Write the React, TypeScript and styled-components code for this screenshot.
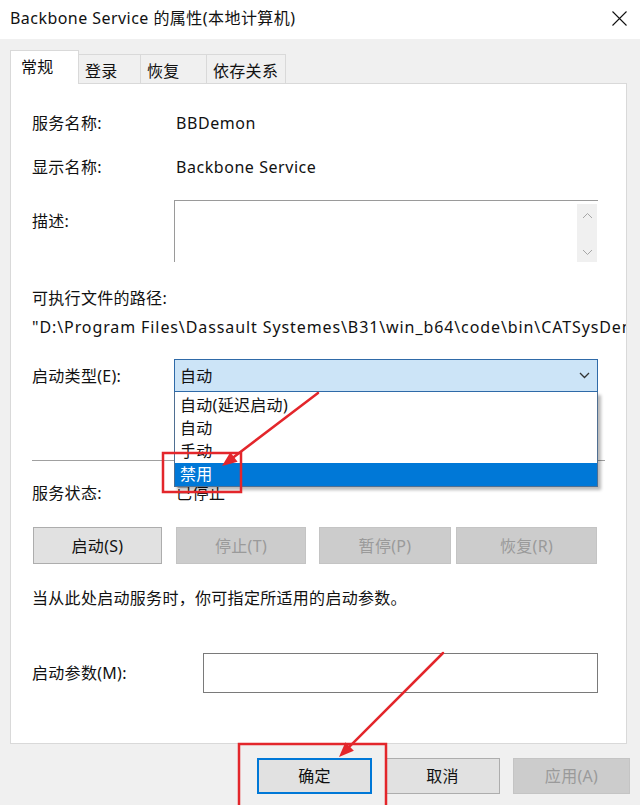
import React from "react";
import styled, { createGlobalStyle } from "styled-components";

const FONT = `"Noto Sans", "Noto Sans CJK SC", sans-serif`;

const GlobalStyle = createGlobalStyle`
  html, body { margin: 0; padding: 0; background: #f0f0f0; }
  body { font-family: ${FONT}; color: #000; }
  * { box-sizing: border-box; }
`;

const Window = styled.div`
  position: relative;
  width: 640px;
  height: 805px;
  overflow: hidden;
  background: #f0f0f0;
  display: flex;
  flex-direction: column;
  font-size: 16px;
  line-height: 24px;
  letter-spacing: 0.3px;
`;

const TitleBar = styled.div`
  height: 39px;
  flex: none;
  background: #fff;
  display: flex;
  align-items: center;
  justify-content: space-between;
  padding: 0 13px 3px 10px;
`;

const Title = styled.div`
  font-size: 16px;
  color: #111;
  letter-spacing: 0.45px;
`;

const CloseSvg = styled.svg`
  width: 15px;
  height: 15px;
  display: block;
`;

const Body = styled.div`
  padding: 11px 13px 0 10px;
  display: flex;
  flex-direction: column;
`;

const TabStrip = styled.div`
  display: flex;
  align-items: flex-end;
  height: 33px;
`;

const Tab = styled.div<{ $w: number; $active?: boolean }>`
  width: ${(p) => p.$w}px;
  height: ${(p) => (p.$active ? 34 : 29)}px;
  margin-bottom: ${(p) => (p.$active ? -1 : 0)}px;
  position: relative;
  z-index: ${(p) => (p.$active ? 1 : 0)};
  background: ${(p) => (p.$active ? "#fff" : "#f0f0f0")};
  border: 1px solid #d9d9d9;
  border-bottom: none;
  border-left-width: ${(p) => (p.$active ? 1 : 0)}px;
  padding: 4px 0 0 ${(p) => (p.$active ? 10 : 6)}px;
  color: #111;
  white-space: nowrap;
`;

const Panel = styled.div`
  height: 661px;
  background: #fff;
  border: 1px solid #d9d9d9;
  padding: 0 28px 0 21px;
  display: flex;
  flex-direction: column;
`;

const FieldRow = styled.div<{ $mt: number; $labelW?: number }>`
  margin-top: ${(p) => p.$mt}px;
  display: grid;
  grid-template-columns: ${(p) => p.$labelW ?? 142}px 1fr;
  align-items: center;
`;

const Label = styled.div<{ $top?: boolean }>`
  color: #111;
  white-space: nowrap;
  align-self: ${(p) => (p.$top ? "start" : "center")};
  padding-top: ${(p) => (p.$top ? 9 : 0)}px;
`;

const Value = styled.div`
  padding-left: 2px;
  color: #111;
  white-space: nowrap;
  letter-spacing: 0.55px;
`;

const Text = styled.div<{ $mt: number }>`
  margin-top: ${(p) => p.$mt}px;
  color: #111;
  white-space: nowrap;
`;

const PathText = styled.div<{ $mt: number }>`
  margin-top: ${(p) => p.$mt}px;
  margin-right: -28px;
  color: #111;
  white-space: nowrap;
  overflow: hidden;
  letter-spacing: 0.9px;
`;

const DescBox = styled.div`
  position: relative;
  height: 62px;
  border-top: 1px solid #9a9a9a;
  border-left: 1px solid #9a9a9a;
  background: #fff;
  display: flex;
  justify-content: flex-end;
  padding-top: 3px;
`;

const ScrollBar = styled.div`
  width: 20px;
  margin-right: 1px;
  height: 58px;
  background: #f0f0f0;
  display: flex;
  flex-direction: column;
  justify-content: space-between;
  align-items: center;
  padding: 8px 0 6px;
`;

const Chevron = styled.svg`
  display: block;
  width: 11px;
  height: 7px;
`;

const ComboWrap = styled.div`
  position: relative;
  height: 33px;
`;

const Combo = styled.div`
  height: 33px;
  background: #cce4f7;
  border: 1px solid #2f6aa8;
  display: flex;
  align-items: center;
  justify-content: space-between;
  padding: 0 7px 0 5px;
  color: #111;
`;

const DropList = styled.div`
  position: absolute;
  left: 0;
  right: 0;
  top: 100%;
  z-index: 5;
  background: #fff;
  border: 1px solid #4f6f92;
  border-top: none;
  padding-top: 2px;
  box-shadow: 3px 3px 3px rgba(0, 0, 0, 0.28);
`;

const DropItem = styled.div<{ $selected?: boolean }>`
  height: 23px;
  line-height: 23px;
  padding-left: 5px;
  background: ${(p) => (p.$selected ? "#0078d7" : "#fff")};
  color: ${(p) => (p.$selected ? "#fff" : "#111")};
`;

const Separator = styled.div<{ $mt: number }>`
  margin-top: ${(p) => p.$mt}px;
  height: 1px;
  background: #a0a0a0;
  margin-right: -7px;
`;

const ButtonRow = styled.div<{ $mt: number }>`
  margin-top: ${(p) => p.$mt}px;
  display: flex;
  padding-left: 1px;
`;

const Btn = styled.div<{ $w: number; $ml?: number; $disabled?: boolean; $default?: boolean; $h?: number }>`
  width: ${(p) => p.$w}px;
  height: ${(p) => p.$h ?? 37}px;
  margin-left: ${(p) => p.$ml ?? 0}px;
  display: flex;
  align-items: center;
  justify-content: center;
  background: ${(p) => (p.$disabled ? "#cccccc" : "#e1e1e1")};
  border: ${(p) =>
    p.$default ? "2px solid #0078d7" : p.$disabled ? "1px solid #c4c4c4" : "1px solid #adadad"};
  color: ${(p) => (p.$disabled ? "#9a9a9a" : "#111")};
  white-space: nowrap;
`;

const ParamInput = styled.div`
  height: 40px;
  border: 1px solid #7a7a7a;
  background: #fff;
`;

const Footer = styled.div`
  display: flex;
  justify-content: flex-end;
  gap: 13px;
  margin-top: 14px;
  margin-right: -3px;
`;

const Overlay = styled.svg`
  position: absolute;
  left: 0;
  top: 0;
  width: 640px;
  height: 805px;
  pointer-events: none;
  z-index: 10;
`;

const RED = "#e3262b";

function Arrow({ x1, y1, x2, y2 }: { x1: number; y1: number; x2: number; y2: number }) {
  const dx = x2 - x1;
  const dy = y2 - y1;
  const len = Math.hypot(dx, dy);
  const ux = dx / len;
  const uy = dy / len;
  const hl = 15;
  const hw = 6;
  const bx = x2 - ux * hl;
  const by = y2 - uy * hl;
  const px = -uy * hw;
  const py = ux * hw;
  const pts = `${x2},${y2} ${bx + px},${by + py} ${bx - px},${by - py}`;
  return (
    <g>
      <line x1={x1} y1={y1} x2={bx + ux * 3} y2={by + uy * 3} stroke={RED} strokeWidth={2.5} strokeLinecap="round" />
      <polygon points={pts} fill={RED} />
    </g>
  );
}

const ChevronDown = ({ color, w = 1 }: { color: string; w?: number }) => (
  <Chevron viewBox="0 0 11 7">
    <path d="M1 1 L5.5 5.5 L10 1" fill="none" stroke={color} strokeWidth={w} />
  </Chevron>
);

const ChevronUp = ({ color }: { color: string }) => (
  <Chevron viewBox="0 0 11 7">
    <path d="M1 6 L5.5 1.5 L10 6" fill="none" stroke={color} strokeWidth={1} />
  </Chevron>
);

export default function App() {
  return (
    <>
      <GlobalStyle />
      <Window>
        <TitleBar>
          <Title>Backbone Service 的属性(本地计算机)</Title>
          <CloseSvg viewBox="0 0 15 15">
            <path d="M0.5 0.5 L14.5 14.5 M14.5 0.5 L0.5 14.5" stroke="#111" strokeWidth={1.1} />
          </CloseSvg>
        </TitleBar>
        <Body>
          <TabStrip>
            <Tab $w={69} $active>常规</Tab>
            <Tab $w={62}>登录</Tab>
            <Tab $w={66}>恢复</Tab>
            <Tab $w={79}>依存关系</Tab>
          </TabStrip>
          <Panel>
            <FieldRow $mt={27}>
              <Label>服务名称:</Label>
              <Value>BBDemon</Value>
            </FieldRow>
            <FieldRow $mt={20}>
              <Label>显示名称:</Label>
              <Value>Backbone Service</Value>
            </FieldRow>
            <FieldRow $mt={21}>
              <Label $top>描述:</Label>
              <DescBox>
                <ScrollBar>
                  <ChevronUp color="#a6a6a6" />
                  <ChevronDown color="#a6a6a6" />
                </ScrollBar>
              </DescBox>
            </FieldRow>
            <Text $mt={24}>可执行文件的路径:</Text>
            <PathText $mt={5}>
              {'"D:\\Program Files\\Dassault Systemes\\B31\\win_b64\\code\\bin\\CATSysDemon.exe"'}
            </PathText>
            <FieldRow $mt={20}>
              <Label>启动类型(E):</Label>
              <ComboWrap>
                <Combo>
                  <span>自动</span>
                  <ChevronDown color="#333" w={1.3} />
                </Combo>
                <DropList>
                  <DropItem>自动(延迟启动)</DropItem>
                  <DropItem>自动</DropItem>
                  <DropItem>手动</DropItem>
                  <DropItem $selected>禁用</DropItem>
                </DropList>
              </ComboWrap>
            </FieldRow>
            <Separator $mt={68} />
            <FieldRow $mt={20}>
              <Label>服务状态:</Label>
              <Value>已停止</Value>
            </FieldRow>
            <ButtonRow $mt={22}>
              <Btn $w={129}>启动(S)</Btn>
              <Btn $w={130} $ml={14} $disabled>停止(T)</Btn>
              <Btn $w={132} $ml={13} $disabled>暂停(P)</Btn>
              <Btn $w={141} $ml={5} $disabled>恢复(R)</Btn>
            </ButtonRow>
            <Text $mt={22}>当从此处启动服务时，你可指定所适用的启动参数。</Text>
            <FieldRow $mt={43} $labelW={171}>
              <Label>启动参数(M):</Label>
              <ParamInput />
            </FieldRow>
          </Panel>
          <Footer>
            <Btn $w={115} $h={36} $default>确定</Btn>
            <Btn $w={115} $h={36}>取消</Btn>
            <Btn $w={117} $h={36} $disabled>应用(A)</Btn>
          </Footer>
        </Body>
        <Overlay viewBox="0 0 640 805">
          <rect x={163} y={453} width={78} height={39} fill="none" stroke={RED} strokeWidth={2.5} />
          <rect x={239} y={744} width={147} height={70} fill="none" stroke={RED} strokeWidth={2.5} />
          <Arrow x1={318} y1={393} x2={222} y2={466} />
          <Arrow x1={443} y1={653} x2={339} y2={757} />
        </Overlay>
      </Window>
    </>
  );
}
